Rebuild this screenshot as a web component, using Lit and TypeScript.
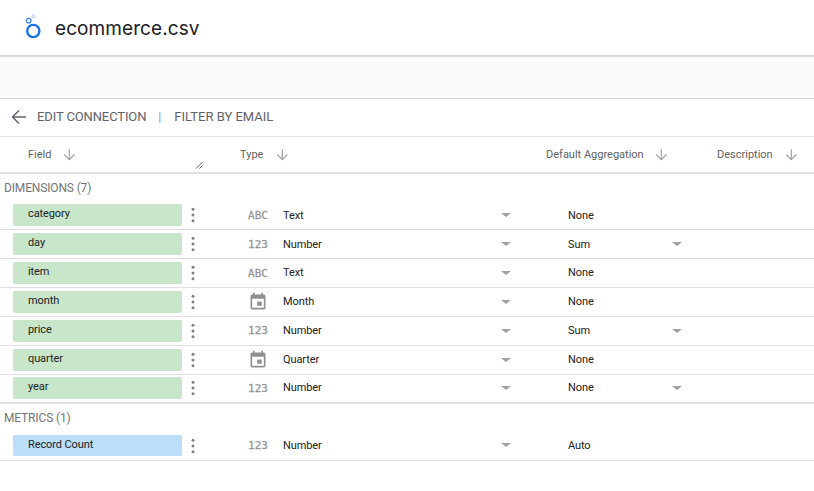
import { LitElement, css, html, nothing } from "lit";
import { customElement } from "lit/decorators.js";

type Field = { name: string; type: string; agg: string; aggArrow?: boolean };

const dimensions: Field[] = [
  { name: "category", type: "Text", agg: "None" },
  { name: "day", type: "Number", agg: "Sum", aggArrow: true },
  { name: "item", type: "Text", agg: "None" },
  { name: "month", type: "Month", agg: "None" },
  { name: "price", type: "Number", agg: "Sum", aggArrow: true },
  { name: "quarter", type: "Quarter", agg: "None" },
  { name: "year", type: "Number", agg: "None", aggArrow: true },
];

const metrics: Field[] = [{ name: "Record Count", type: "Number", agg: "Auto" }];

const sortArrow = html`<svg class="sort" width="14" height="14" viewBox="0 0 14 14">
  <path d="M7.3 1.2v10M2.2 6.5l5.1 5.1 5.1-5.1" fill="none" stroke="#a0a0a0" stroke-width="1.2" />
</svg>`;

const caret = html`<span class="caret"></span>`;

@customElement("app-root")
export class AppRoot extends LitElement {
  static styles = css`
    :host {
      display: block;
      font-family: Roboto, "Liberation Sans", sans-serif;
      color: #212121;
      background: #fff;
      min-height: 491px;
    }

    .title-bar {
      height: 55px;
      display: flex;
      align-items: center;
      padding-left: 24px;
      gap: 13px;
      border-bottom: 2px solid #dcdcdc;
    }

    .title {
      padding-top: 1px;
      font-family: Inter, Roboto, sans-serif;
      font-size: 19px;
      letter-spacing: 0.08px;
      color: #202124;
    }

    .toolbar {
      height: 41px;
      background: #fafafa;
      border-bottom: 1px solid #d4d4d4;
    }

    .actions {
      height: 35px;
      padding: 0 0 2px 11px;
      display: flex;
      align-items: center;
      font-size: 13px;
      color: #5f6368;
      border-bottom: 1px solid #e4e4e4;
    }

    .actions svg {
      margin-right: 10px;
    }

    .edit {
      letter-spacing: -0.12px;
    }

    .sep {
      margin: 0 13px 0 12px;
      color: #7a9cc6;
      font-size: 12px;
    }

    .head {
      height: 35px;
      display: grid;
      grid-template-columns: 212px 306px 171px 1fr;
      align-items: center;
      padding-left: 28px;
      border-bottom: 2px solid #e0e0e0;
      font-size: 11px;
      color: #616161;
      position: relative;
    }

    .head > div {
      display: flex;
      align-items: center;
    }

    .field-head .sort {
      margin-left: 11px;
    }

    .type-head .sort {
      margin-left: 12px;
    }

    .agg-head .sort {
      margin-left: 10px;
    }

    .desc-head .sort {
      margin-left: 11px;
    }

    .resize {
      position: absolute;
      left: 195px;
      top: 24px;
    }

    .section {
      height: 27.4px;
      display: flex;
      align-items: center;
      padding-left: 4px;
      font-size: 12px;
      letter-spacing: -0.15px;
      color: #757575;
    }

    .section.metrics {
      height: 28px;
    }

    /* rows in the source are a shade under 29px, which is why the text steps up a pixel partway down */
    .row {
      height: 27.9px;
      display: grid;
      grid-template-columns: 169px 22px 64px 244px 171px;
      align-items: center;
      padding-left: 13px;
      border-bottom: 1px solid #e0e0e0;
      font-size: 11px;
      letter-spacing: -0.1px;
    }

    .row.last {
      height: 26.9px;
      border-bottom-width: 2px;
    }

    .pill {
      height: 21.7px;
      border-radius: 2px;
      background: #c8e6c9;
      padding-left: 15px;
      line-height: 20.6px;
      color: #202124;
    }

    .pill.metric {
      background: #bbdefb;
    }

    .dots {
      display: flex;
      justify-content: center;
    }

    .type-icon {
      margin-left: 44px;
      height: 22px;
      display: flex;
      align-items: center;
      justify-content: center;
    }

    .glyph {
      font-family: "DejaVu Sans Mono", monospace;
      font-size: 11px;
      letter-spacing: 0;
      color: #969696;
      -webkit-text-stroke: 0.3px #969696;
    }

    .type-cell {
      padding: 0 1px 0.4px 15px;
      display: flex;
      align-items: center;
      justify-content: space-between;
    }

    .agg-cell {
      margin-left: 56px;
      padding: 0 1px 0.4px 0;
      width: 114px;
      display: flex;
      align-items: center;
      justify-content: space-between;
    }

    .caret {
      width: 0;
      height: 0;
      border-left: 5px solid transparent;
      border-right: 5px solid transparent;
      border-top: 4px solid #a0a0a0;
    }
  `;

  private typeIcon(type: string) {
    if (type === "Text") return html`<span class="glyph">ABC</span>`;
    if (type === "Number") return html`<span class="glyph">123</span>`;
    return html`<svg width="22" height="22" viewBox="0 0 24 24">
      <path
        fill="#909090"
        d="M19 3h-1V1h-2v2H8V1H6v2H5a2 2 0 0 0-2 2v14a2 2 0 0 0 2 2h14a2 2 0 0 0 2-2V5a2 2 0 0 0-2-2zm0 16H5V8h14v11z"
      />
      <rect x="11" y="11.5" width="5.5" height="5" fill="#909090" />
    </svg>`;
  }

  private renderRow(field: Field, metric: boolean, last: boolean) {
    return html`<div class="row ${last ? "last" : ""}">
      <div class="pill ${metric ? "metric" : ""}">${field.name}</div>
      <div class="dots">
        <svg width="4" height="18" viewBox="0 0 4 18">
          <circle cx="2" cy="3.2" r="1.5" fill="#808080" />
          <circle cx="2" cy="9" r="1.5" fill="#808080" />
          <circle cx="2" cy="14.8" r="1.5" fill="#808080" />
        </svg>
      </div>
      <div class="type-icon">${this.typeIcon(field.type)}</div>
      <div class="type-cell"><span>${field.type}</span>${caret}</div>
      <div class="agg-cell"><span>${field.agg}</span>${field.aggArrow ? caret : nothing}</div>
    </div>`;
  }

  render() {
    return html`
      <div class="title-bar">
        <svg width="18" height="27" viewBox="0 0 18 27">
          <circle cx="9.3" cy="17" r="6.1" fill="none" stroke="#1a73e8" stroke-width="2.4" />
          <circle cx="4.7" cy="6.7" r="2.3" fill="none" stroke="#4285f4" stroke-width="1.3" />
          <circle cx="9.3" cy="2.3" r="1.5" fill="none" stroke="#a8c7fa" stroke-width="1" />
        </svg>
        <span class="title">ecommerce.csv</span>
      </div>
      <div class="toolbar"></div>
      <div class="actions">
        <svg width="16" height="16" viewBox="0 0 16 16">
          <path d="M15 8H1.5M8 1.5 1.5 8 8 14.5" fill="none" stroke="#5f6368" stroke-width="1.5" />
        </svg>
        <span class="edit">EDIT CONNECTION</span>
        <span class="sep">|</span>
        <span>FILTER BY EMAIL</span>
      </div>
      <div class="head">
        <div class="field-head">Field${sortArrow}</div>
        <div class="type-head">Type${sortArrow}</div>
        <div class="agg-head">Default Aggregation${sortArrow}</div>
        <div class="desc-head">Description${sortArrow}</div>
        <svg class="resize" width="8" height="8" viewBox="0 0 8 8">
          <path d="M1 7.5 7.5 1M4.5 7.5l3-3" stroke="#616161" stroke-width="1" />
        </svg>
      </div>
      <div class="section">DIMENSIONS (7)</div>
      ${dimensions.map((f, i) => this.renderRow(f, false, i === dimensions.length - 1))}
      <div class="section metrics">METRICS (1)</div>
      ${metrics.map((f) => this.renderRow(f, true, false))}
    `;
  }
}
